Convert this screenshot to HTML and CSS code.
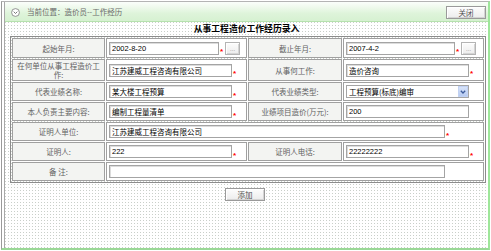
FILE: index.html
```html
<!DOCTYPE html>
<html lang="zh-CN">
<head>
<meta charset="utf-8">
<title>从事工程造价工作经历录入</title>
<link rel="stylesheet" href="styles.css">
</head>
<body>
<div class="frame">
  <div class="inner">
    <div class="topbar">
      <svg class="loc-icon" viewBox="0 0 9 9" width="9" height="9"><circle cx="4.5" cy="4.5" r="3.9" fill="#fff" stroke="#7a7a7a" stroke-width="0.8"/><path d="M2.7 3.7 L4.5 5.5 L6.3 3.7" fill="none" stroke="#6a6a6a" stroke-width="0.9"/></svg>
      <span class="loc-text">当前位置：造价员--工作经历</span>
      <button class="btn close" type="button">关闭</button>
    </div>
    <div class="content">
      <div class="title">从事工程造价工作经历录入</div>
      <table class="form">
        <colgroup><col class="c1"><col class="c2"><col class="c3"><col class="c4"></colgroup>
        <tr class="r1">
          <td class="lbl">起始年月:</td>
          <td class="val"><div class="field"><input class="inp w-s" type="text" value="2002-8-20"><span class="req">*</span><button class="btn pick" type="button">...</button></div></td>
          <td class="lbl">截止年月:</td>
          <td class="val"><div class="field"><input class="inp w-s2" type="text" value="2007-4-2"><span class="req">*</span><button class="btn pick" type="button">...</button></div></td>
        </tr>
        <tr class="r2">
          <td class="lbl lbl2">在何单位从事工程造价工<br>作:</td>
          <td class="val"><div class="field"><input class="inp w-m" type="text" value="江苏建威工程咨询有限公司"><span class="req">*</span></div></td>
          <td class="lbl">从事何工作:</td>
          <td class="val"><div class="field"><input class="inp w-m" type="text" value="造价咨询"><span class="req">*</span></div></td>
        </tr>
        <tr class="r3">
          <td class="lbl">代表业绩名称:</td>
          <td class="val"><div class="field"><input class="inp w-m" type="text" value="某大楼工程预算"><span class="req">*</span></div></td>
          <td class="lbl">代表业绩类型:</td>
          <td class="val"><div class="field"><div class="select"><span class="sel-text">工程预算(标底)编审</span><span class="sel-arrow"><svg viewBox="0 0 8 8" width="8" height="8"><path d="M1.8 2.8 L4 5 L6.2 2.8" fill="none" stroke="#3b5a9a" stroke-width="1.3"/></svg></span></div></div></td>
        </tr>
        <tr class="r4">
          <td class="lbl">本人负责主要内容:</td>
          <td class="val"><div class="field"><input class="inp w-m" type="text" value="编制工程量清单"><span class="req">*</span></div></td>
          <td class="lbl">业绩项目造价(万元):</td>
          <td class="val"><div class="field"><input class="inp w-m" type="text" value="200"></div></td>
        </tr>
        <tr class="r5">
          <td class="lbl">证明人单位:</td>
          <td class="val" colspan="3"><div class="field"><input class="inp w-l" type="text" value="江苏建威工程咨询有限公司"><span class="req">*</span></div></td>
        </tr>
        <tr class="r6">
          <td class="lbl">证明人:</td>
          <td class="val"><div class="field"><input class="inp w-m" type="text" value="222"><span class="req">*</span></div></td>
          <td class="lbl">证明人电话:</td>
          <td class="val"><div class="field"><input class="inp w-m" type="text" value="22222222"><span class="req">*</span></div></td>
        </tr>
        <tr class="r7">
          <td class="lbl">备 注:</td>
          <td class="val" colspan="3"><div class="field"><input class="inp w-l" type="text" value=""></div></td>
        </tr>
      </table>
      <div class="actions"><button class="btn add" type="button">添加</button></div>
    </div>
  </div>
</div>
</body>
</html>
```

FILE: styles.css
```css
html, body {
  margin: 0;
  padding: 0;
  background: #fff;
}
body {
  width: 491px;
  height: 251px;
  overflow: hidden;
  font-family: "Noto Sans CJK SC", "Liberation Sans", sans-serif;
  font-size: 7.5px;
  color: #5a5a5a;
}
.frame {
  margin: 1px 0 0 1px;
  width: 486px;
  height: 246px;
  border-left: 1px solid #9a9a9a;
  border-top: 1px solid #b4b4b4;
  border-right: 2px solid #9ee69a;
  border-bottom: 2px solid #9ad896;
  display: flex;
}
.inner {
  flex: 1;
  min-width: 0;
  margin-left: 2px;
  border-left: 1px solid #a8a8a8;
  display: flex;
  flex-direction: column;
}
.topbar {
  height: 19px;
  flex: none;
  border-bottom: 1px solid #b6e2ae;
  background: linear-gradient(#fbfefb 0, #f0faee 25%, #def4da 60%, #d6f1d1 100%);
  display: flex;
  align-items: center;
  padding: 0 2px 0 6px;
}
.loc-icon {
  width: 9px;
  height: 9px;
  margin-top: 2px;
  margin-right: 7px;
  flex: none;
}
.loc-text {
  flex: 1;
  color: #6a6a6a;
  margin-top: 1px;
  line-height: 10px;
}
.btn {
  font-family: "Noto Sans CJK SC", "Liberation Sans", sans-serif;
  font-size: 7.5px;
  color: #505050;
  padding: 0;
  margin: 0;
  border: 1px solid #9a9a9a;
  background: linear-gradient(#fdfdfd, #ececec);
  box-shadow: inset 1px 1px 0 #fff, inset -1px -1px 0 #d4d4d4;
  line-height: 11px;
}
.close {
  width: 40px;
  height: 13px;
  margin-top: 2px;
}
.content {
  flex: 1;
  background-color: #fff;
  background-image:
    linear-gradient(90deg, transparent 1px, #fff 1px),
    linear-gradient(#c9cfc9 1px, transparent 1px);
  background-size: 3px 3px;
  display: flex;
  flex-direction: column;
}
.title {
  height: 13px;
  line-height: 13px;
  text-align: center;
  font-size: 8.8px;
  font-weight: bold;
  color: #000;
}
.form {
  border-collapse: separate;
  border-spacing: 1px;
  border: 1px solid #8c8c8c;
  table-layout: fixed;
  width: 476px;
  margin: 1px 0 0 5px;
}
.c1 { width: 93px; }
.c2 { width: 141px; }
.c3 { width: 94px; }
.c4 { width: 141px; }
.form td {
  box-sizing: border-box;
  border: 1px solid #a0a0a0;
  height: 19px;
  padding: 0;
  vertical-align: middle;
}
.form .r1 td { height: 20px; }
.form .r2 td { height: 22px; }
.form td.lbl {
  background: #f3f4f2;
  text-align: center;
  color: #626262;
  line-height: 11px;
  padding: 0 3px;
}
.form td.lbl2 {
  line-height: 9.5px;
}
.form td.val {
  background: #fff;
  padding-left: 2px;
}
.field {
  display: flex;
  align-items: center;
}
.inp {
  box-sizing: border-box;
  height: 13px;
  margin: 0;
  padding: 0 0 0 2px;
  border: 1px solid #a4a4a4;
  box-shadow: inset 1px 1px 0 #dcdcdc;
  background: #fff;
  font-family: "Liberation Sans", "Noto Sans CJK SC", sans-serif;
  font-size: 7.5px;
  color: #000;
  outline: none;
}
.w-s { width: 110px; }
.w-s2 { width: 109px; }
.w-m { width: 123px; }
.w-l { width: 336px; }
.req {
  color: #f00;
  font-family: "Liberation Sans", sans-serif;
  font-size: 8px;
  font-weight: bold;
  line-height: 9px;
  margin: 7px 0 0 1px;
}
.pick {
  width: 15px;
  height: 13px;
  margin-left: 2px;
  color: #999;
  font-size: 6px;
  line-height: 9px;
  border-color: #b4b4b4;
}
.select {
  box-sizing: border-box;
  width: 123px;
  height: 13px;
  border: 1px solid #a4a4a4;
  background: #fff;
  display: flex;
  align-items: center;
  font-size: 7.5px;
  color: #000;
}
.sel-text {
  flex: 1;
  padding-left: 2px;
  line-height: 11px;
}
.sel-arrow {
  width: 10px;
  height: 11px;
  background: linear-gradient(#dbe6fb, #b3c8f0);
  box-shadow: inset 0 0 0 1px #c2d2f3;
  display: flex;
  align-items: center;
  justify-content: center;
}
.actions {
  display: flex;
  justify-content: center;
  padding-top: 5px;
  padding-right: 3px;
}
.add {
  width: 40px;
  height: 13px;
}
```
